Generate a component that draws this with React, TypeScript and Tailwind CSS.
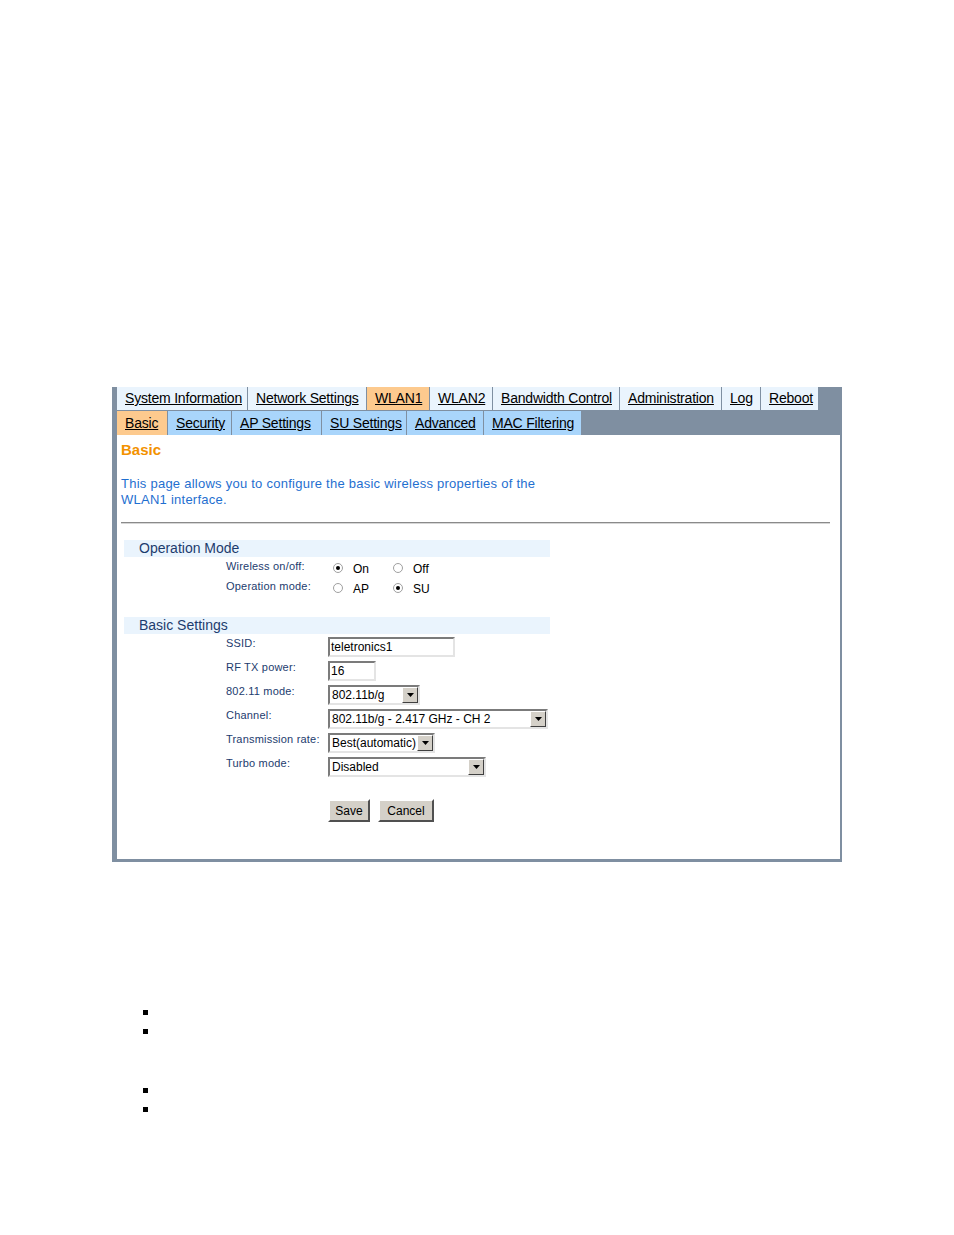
import React from 'react'

const topTabs = [
  { label: 'System Information', w: 'w-[130px]' },
  { label: 'Network Settings', w: 'w-[118px]' },
  { label: 'WLAN1', w: 'w-[62px]', active: true },
  { label: 'WLAN2', w: 'w-[62px]' },
  { label: 'Bandwidth Control', w: 'w-[126px]' },
  { label: 'Administration', w: 'w-[101px]' },
  { label: 'Log', w: 'w-[38px]' },
  { label: 'Reboot', w: 'w-[57px]' },
]

const subTabs = [
  { label: 'Basic', w: 'w-[50px]', active: true },
  { label: 'Security', w: 'w-[63px]' },
  { label: 'AP Settings', w: 'w-[89px]' },
  { label: 'SU Settings', w: 'w-[84px]' },
  { label: 'Advanced', w: 'w-[76px]' },
  { label: 'MAC Filtering', w: 'w-[97px]' },
]

function Radio({ checked, label }: { checked?: boolean; label: string }) {
  return (
    <div className="flex items-center w-[60px] h-[15px]">
      <span className="ml-[5px] w-[10px] h-[10px] rounded-full border border-[#a0a0a0] bg-white flex items-center justify-center">
        {checked && <span className="w-[4px] h-[4px] rounded-full bg-black" />}
      </span>
      <span className="ml-[10px] text-[12px] leading-[14px] text-black mt-[2px]">{label}</span>
    </div>
  )
}

function TextInput({ value, w }: { value: string; w: string }) {
  return (
    <div
      className={`${w} h-[20px] bg-white border-2 border-t-[#7b7b7b] border-l-[#7b7b7b] border-b-[#e4e4e4] border-r-[#e4e4e4] flex items-center px-[1px] text-[12px] text-black`}
    >
      {value}
    </div>
  )
}

function Select({ value, w }: { value: string; w: string }) {
  return (
    <div
      className={`${w} h-[20px] bg-white border-2 border-t-[#7b7b7b] border-l-[#7b7b7b] border-b-[#e4e4e4] border-r-[#e4e4e4] flex items-stretch text-[12px] text-black`}
    >
      <div className="flex-1 flex items-center pl-[2px] whitespace-nowrap overflow-hidden">{value}</div>
      <div className="w-[16px] bg-[#d4d0c8] border border-t-white border-l-white border-b-[#404040] border-r-[#404040] flex items-center justify-center">
        <svg width="7" height="4" viewBox="0 0 7 4">
          <path d="M0 0h7L3.5 4z" fill="#000" />
        </svg>
      </div>
    </div>
  )
}

function Button({ label, w }: { label: string; w: string }) {
  return (
    <div
      className={`${w} h-[23px] bg-[#d4d0c8] border-2 border-t-white border-l-white border-b-[#505050] border-r-[#505050] flex items-center justify-center text-[12px] text-black`}
    >
      {label}
    </div>
  )
}

function Row({ label, children }: { label: string; children: React.ReactNode }) {
  return (
    <div className="flex items-start h-[19px]">
      <div className="w-[102px] text-[11px] leading-[13px] tracking-[0.2px] text-[#1d3c6e] whitespace-nowrap">{label}</div>
      {children}
    </div>
  )
}

function SectionBar({ title }: { title: string }) {
  return (
    <div className="ml-[3px] w-[426px] h-[17px] bg-[#eaf4fd] pl-[15px] text-[14px] leading-[17px] text-[#1d3c6e]">
      {title}
    </div>
  )
}

export default function App() {
  return (
    <div className="w-[954px] h-[1235px] bg-white overflow-hidden" style={{ fontFamily: '"Liberation Sans", Arial, sans-serif' }}>
      <div className="ml-[112px] mt-[387px] w-[730px] h-[475px] bg-[#7f8fa1] pl-[5px] pr-[2px] pb-[3px] flex flex-col">
        {/* top nav */}
        <div className="flex gap-[1px] h-[23px]">
          {topTabs.map((t) => (
            <div
              key={t.label}
              className={`${t.w} ${t.active ? 'bg-[#fdca8e]' : 'bg-[#eaf4fd]'} flex items-center pl-[8px] text-[14px] tracking-[-0.2px] underline text-black whitespace-nowrap`}
            >
              {t.label}
            </div>
          ))}
        </div>
        {/* sub nav */}
        <div className="flex gap-[1px] h-[24px] mt-[1px]">
          {subTabs.map((t) => (
            <div
              key={t.label}
              className={`${t.w} ${t.active ? 'bg-[#fdca8e]' : 'bg-[#a9d5fb]'} flex items-center pl-[8px] text-[14px] tracking-[-0.2px] underline text-black whitespace-nowrap`}
            >
              {t.label}
            </div>
          ))}
        </div>
        {/* content */}
        <div className="flex-1 bg-white pl-[4px] pr-[10px] pt-[6px]">
          <div className="text-[15px] leading-[18px] font-bold text-[#f39200]">Basic</div>
          <div className="mt-[17px] text-[13px] leading-[16px] tracking-[0.25px] text-[#1f6fd0] w-[460px]">
            This page allows you to configure the basic wireless properties of the
            <br />
            WLAN1 interface.
          </div>
          <div className="mt-[14px] border-t border-t-[#8a8a8a] border-b border-b-[#d6d6d6]" />

          <div className="mt-[16px]">
            <SectionBar title="Operation Mode" />
          </div>
          <div className="ml-[105px] mt-[3px] flex flex-col gap-[1px]">
            <Row label="Wireless on/off:">
              <Radio checked label="On" />
              <Radio label="Off" />
            </Row>
            <Row label="Operation mode:">
              <Radio label="AP" />
              <Radio checked label="SU" />
            </Row>
          </div>

          <div className="mt-[18px]">
            <SectionBar title="Basic Settings" />
          </div>
          <div className="ml-[105px] mt-[3px] flex flex-col gap-[5px]">
            <Row label="SSID:">
              <TextInput value="teletronics1" w="w-[127px]" />
            </Row>
            <Row label="RF TX power:">
              <TextInput value="16" w="w-[48px]" />
            </Row>
            <Row label="802.11 mode:">
              <Select value="802.11b/g" w="w-[92px]" />
            </Row>
            <Row label="Channel:">
              <Select value="802.11b/g - 2.417 GHz - CH 2" w="w-[220px]" />
            </Row>
            <Row label="Transmission rate:">
              <Select value="Best(automatic)" w="w-[107px]" />
            </Row>
            <Row label="Turbo mode:">
              <Select value="Disabled" w="w-[158px]" />
            </Row>
          </div>

          <div className="ml-[207px] mt-[23px] flex gap-[8px]">
            <Button label="Save" w="w-[42px]" />
            <Button label="Cancel" w="w-[56px]" />
          </div>
        </div>
      </div>

      <ul className="mt-[148px] ml-[143px] flex flex-col gap-[14px]">
        <li className="w-[5px] h-[5px] bg-black" />
        <li className="w-[5px] h-[5px] bg-black" />
      </ul>
      <ul className="mt-[54px] ml-[143px] flex flex-col gap-[14px]">
        <li className="w-[5px] h-[5px] bg-black" />
        <li className="w-[5px] h-[5px] bg-black" />
      </ul>
    </div>
  )
}
